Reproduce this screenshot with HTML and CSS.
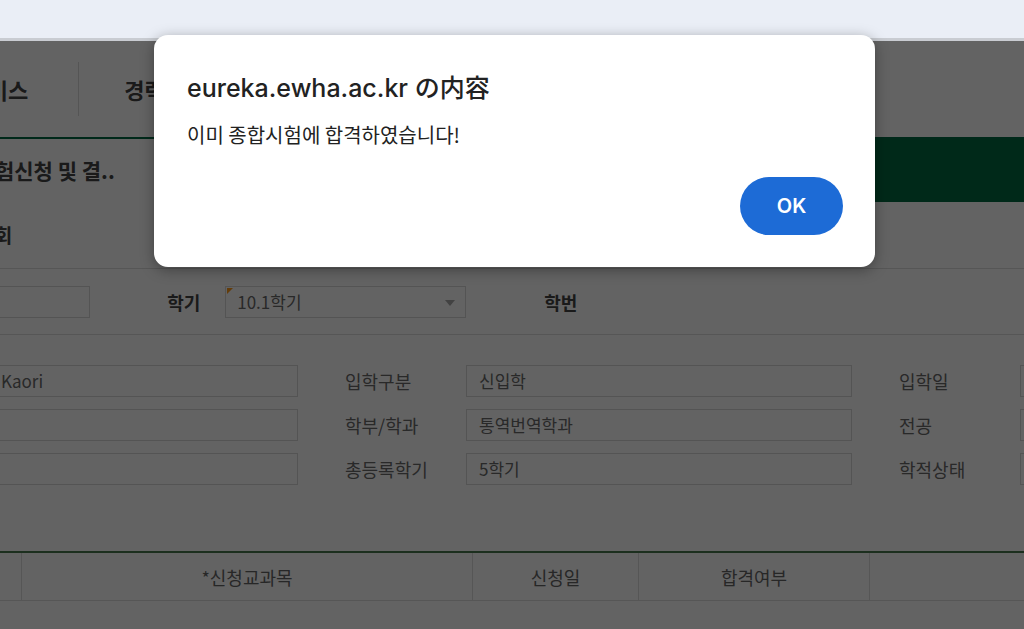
FILE: index.html
```html
<!DOCTYPE html>
<html>
    <head>
        <title>종합시험신청 및 결과조회</title>
        <link rel="stylesheet" href="styles.css">
    </head>
    <body>
        <div class='chrome'></div>
        <div class='viewport'>
            <div class='page'>
                <nav class='gnb'>
                    <div class='gnb-item'>학사서비스</div>
                    <div class='gnb-item'>경력개발</div>
                    <div class='gnb-item'>생활지원</div>
                </nav>
                <div class='title-bar'>
                    <h2 class='page-title'>종합시험신청 및 결..</h2>
                    <div class='title-band'></div>
                </div>
                <div class='sub-title'>학적사항 조회</div>
                <div class='search-row'>
                    <span class='label bold'>년도</span>
                    <input type='text' class='box yr' value=''>
                    <span class='label bold term'>학기</span>
                    <div class='box select'>
                        <span class='req'></span>
                        10.1학기
                        <span class='arrow'></span>
                    </div>
                    <span class='label bold sid'>학번</span>
                </div>
                <div class='info-grid'>
                    <span class='label'>성명</span>
                    <div class='box'>Kaori</div>
                    <span class='label'>입학구분</span>
                    <div class='box'>신입학</div>
                    <span class='label'>입학일</span>
                    <div class='box'></div>

                    <span class='label'>학년</span>
                    <div class='box'></div>
                    <span class='label'>학부/학과</span>
                    <div class='box'>통역번역학과</div>
                    <span class='label'>전공</span>
                    <div class='box'></div>

                    <span class='label'>과정</span>
                    <div class='box'></div>
                    <span class='label'>총등록학기</span>
                    <div class='box'>5학기</div>
                    <span class='label'>학적상태</span>
                    <div class='box'></div>
                </div>
                <table class='list'>
                    <tr>
                        <th class='c-no'>No</th>
                        <th class='c-subj'>*신청교과목</th>
                        <th class='c-date'>신청일</th>
                        <th class='c-pass'>합격여부</th>
                        <th class='c-etc'></th>
                    </tr>
                </table>
            </div>
            <div class='dim'></div>
        </div>

        <div class='alert'>
            <div class='alert-title'>eureka.ewha.ac.kr の内容</div>
            <div class='alert-msg'>이미 종합시험에 합격하였습니다!</div>
            <div class='alert-btns'>
                <button class='ok'>OK</button>
            </div>
        </div>
    </body>
</html>
```

FILE: styles.css
```css
body{
    margin: 0;
    width: 1024px;
    height: 629px;
    overflow: hidden;
    font-family: "Noto Sans CJK KR", sans-serif;
    background-color: #eaeef6;
}
.chrome{
    height: 38px;
    background-color: #eaeef6;
    border-bottom: 3px solid #c9ccd2;
}
.viewport{
    position: relative;
    height: 588px;
    overflow: hidden;
    background-color: #fff;
}
.dim{
    position: absolute;
    top: 0;
    left: 0;
    right: 0;
    bottom: 0;
    background-color: rgba(0,0,0,0.61);
}
.page{
    margin-left: -200px;
    width: 1500px;
    color: #666;
}

/* top menu */
.gnb{
    display: flex;
    align-items: center;
    height: 96px;
    padding-left: 77px;
    border-bottom: 2px solid #006b43;
}
.gnb-item{
    font-size: 22px;
    font-weight: bold;
    color: #444;
    padding: 0 50px 0 45px;
    line-height: 54px;
    border-right: 1px solid #dcdcdc;
}
.gnb-item:first-child{
    padding-left: 50px;
}

.title-bar{
    display: flex;
    height: 63px;
}
.page-title{
    margin: 0;
    width: 600px;
    padding-left: 137px;
    font-size: 21px;
    line-height: 63px;
    color: #444;
}
.title-band{
    flex: 1;
    background-color: #006a42;
}
.sub-title{
    height: 66px;
    line-height: 66px;
    padding-left: 103px;
    font-size: 19px;
    font-weight: bold;
    color: #444;
    border-bottom: 1px solid #dedede;
}

.label{
    font-size: 18px;
    color: #6a6a6a;
}
.bold{
    font-weight: bold;
    color: #444;
}
.box{
    box-sizing: border-box;
    height: 32px;
    border: 1px solid #d8d8d8;
    background-color: #fff;
    padding: 0 12px;
    font-family: "Noto Sans CJK KR", sans-serif;
    font-size: 17px;
    line-height: 30px;
    color: #6a6a6a;
}

.search-row{
    display: flex;
    align-items: center;
    height: 65px;
    padding-left: 49px;
    border-bottom: 1px solid #dedede;
}
.yr{
    width: 190px;
    margin-left: 18px;
}
.term{
    margin-left: 77px;
    margin-right: 25px;
}
.select{
    position: relative;
    width: 241px;
    padding-left: 11px;
}
.req{
    position: absolute;
    top: 1px;
    left: 1px;
    border-top: 6px solid #ff9a1c;
    border-right: 6px solid transparent;
}
.arrow{
    position: absolute;
    right: 10px;
    top: 13px;
    border-top: 6px solid #aaa;
    border-left: 5px solid transparent;
    border-right: 5px solid transparent;
}
.sid{
    margin-left: 78px;
}

.info-grid{
    display: grid;
    grid-template-columns: 158px 310px 168px 386px 168px 300px;
    row-gap: 12px;
    align-items: center;
    margin-left: 30px;
    padding-top: 30px;
}
.info-grid .label{
    padding-left: 47px;
}

.list{
    margin-top: 66px;
    margin-left: 100px;
    border-collapse: collapse;
    border-top: 2px solid #4a7a4f;
}
.list th{
    height: 47px;
    font-size: 18px;
    font-weight: normal;
    color: #666;
    border-bottom: 1px solid #dedede;
    border-left: 1px solid #dedede;
    padding: 0;
}
.list th:first-child{
    border-left: none;
}
.c-no{ width: 121px; }
.c-subj{ width: 450px; }
.c-date{ width: 165px; }
.c-pass{ width: 230px; }
.c-etc{ width: 300px; }

/* alert dialog */
.alert{
    position: absolute;
    top: 35px;
    left: 154px;
    width: 721px;
    height: 232px;
    box-sizing: border-box;
    padding: 38px 32px 32px 33px;
    background-color: #fff;
    border-radius: 14px;
    box-shadow: 0 3px 14px rgba(0,0,0,0.35);
}
.alert-title{
    font-family: Inter, "Noto Sans CJK JP", sans-serif;
    font-size: 25px;
    font-weight: 500;
    line-height: 30px;
    color: #222;
}
.alert-msg{
    margin-top: 19px;
    font-family: "Noto Sans CJK KR", sans-serif;
    font-size: 20px;
    line-height: 26px;
    color: #222;
}
.alert-btns{
    display: flex;
    justify-content: flex-end;
    margin-top: 29px;
}
.ok{
    width: 103px;
    height: 58px;
    border: none;
    border-radius: 29px;
    background-color: #1d6bd6;
    color: #fff;
    font-family: Inter, sans-serif;
    font-size: 20px;
    font-weight: 600;
}
```
